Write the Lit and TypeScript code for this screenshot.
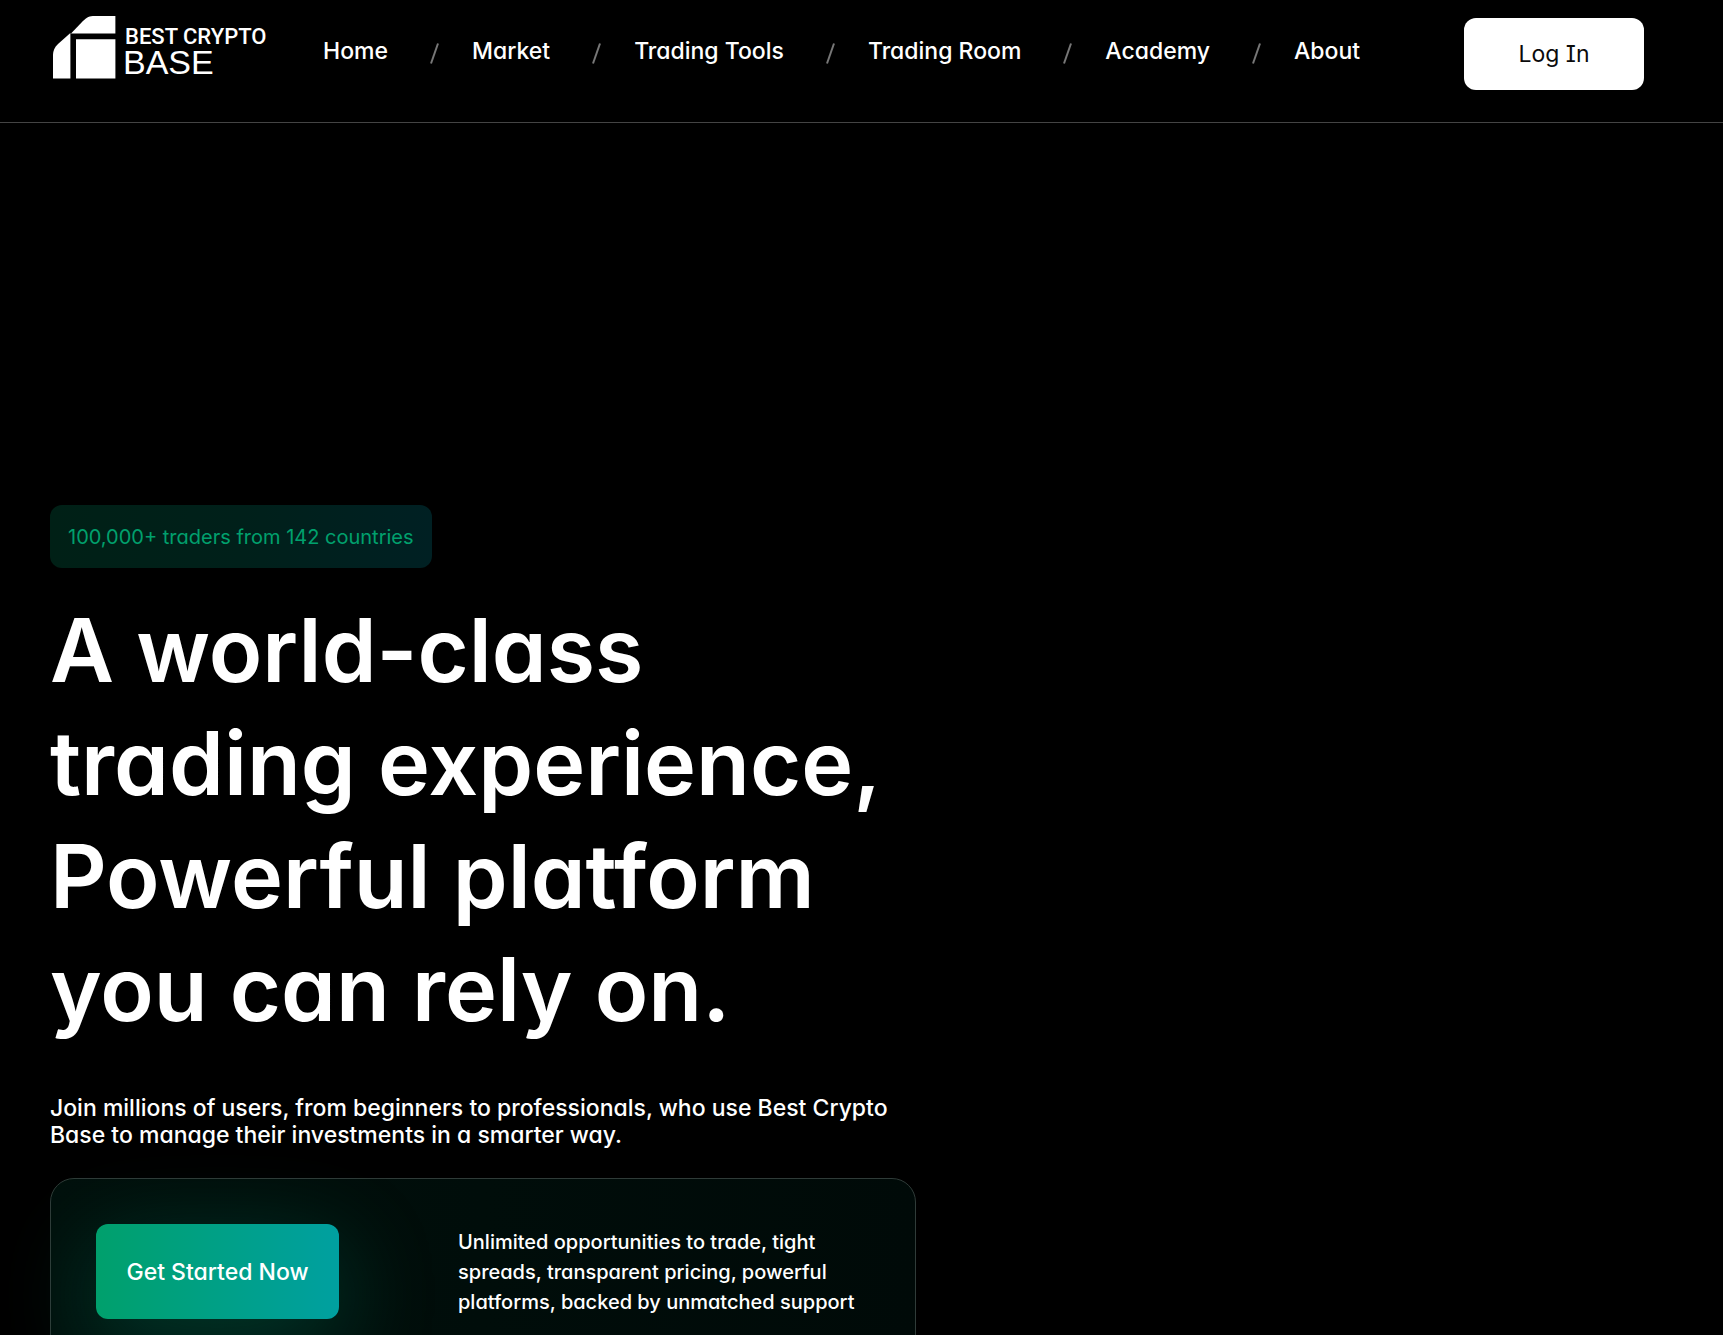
import { LitElement, css, html, svg } from "lit";
import { customElement } from "lit/decorators.js";

const NAV_ITEMS = ["Home", "Market", "Trading Tools", "Trading Room", "Academy", "About"];

const logo = svg`
  <svg class="logo" viewBox="0 0 216 66" role="img" aria-label="Best Crypto Base">
    <g fill="#fff">
      <path d="M0 62.4V39C0 34.500 1.500 31.500 5 28L17.400 17V62.400Z" />
      <path d="M18 17.400L29.500 5.500C34 1 36.500 0 41.500 0H62.400V17.400Z" />
      <path d="M23 23.200H62.400V62.400H23Z" />
      <text class="logo-top" x="72" y="28">BEST CRYPTO</text>
      <text class="logo-bottom" x="70" y="58">BASE</text>
    </g>
  </svg>
`;

@customElement("site-header")
export class SiteHeader extends LitElement {
  static styles = css`
    :host {
      display: block;
      border-bottom: 1px solid #444;
    }
    .bar {
      display: flex;
      align-items: flex-start;
      box-sizing: border-box;
      height: 122px;
      padding: 16px 79px 0 53px;
    }
    .home-link {
      display: block;
      flex: none;
      width: 216px;
      height: 66px;
      margin-right: 54px;
    }
    .logo {
      display: block;
      width: 216px;
      height: 66px;
    }
    .logo-top {
      font: 500 22px "Roboto", sans-serif;
    }
    .logo-bottom {
      font: 400 34px "Liberation Sans", Arial, sans-serif;
    }
    .links {
      display: flex;
      margin: 20px 0 0;
      padding: 0;
      list-style: none;
    }
    .item {
      display: flex;
      align-items: flex-start;
    }
    .link {
      color: #fff;
      font-size: 23px;
      font-weight: 500;
      line-height: 30px;
      white-space: nowrap;
      text-decoration: none;
    }
    .slash {
      width: 9px;
      height: 21px;
      margin: 7px 33px 0 42px;
      stroke: #777;
      stroke-width: 2;
    }
    .login {
      width: 180px;
      height: 72px;
      margin: 2px 0 0 auto;
      border: 0;
      border-radius: 12px;
      background: #fff;
      color: #0b0b0b;
      font: 400 23px "Inter", sans-serif;
      font-feature-settings: "cv11", "cv08";
      cursor: pointer;
    }
  `;

  render() {
    return html`
      <header class="bar">
        <a class="home-link" href="#">${logo}</a>
        <nav aria-label="Main">
          <ul class="links">
            ${NAV_ITEMS.map(
              (label, i) => html`
                <li class="item">
                  <a class="link" href="#">${label}</a>
                  ${i < NAV_ITEMS.length - 1
                    ? html`<svg class="slash" viewBox="0 0 9 21" aria-hidden="true">
                        <line x1="1" y1="20.500" x2="8" y2="0.500" />
                      </svg>`
                    : null}
                </li>
              `
            )}
          </ul>
        </nav>
        <button class="login" type="button">Log In</button>
      </header>
    `;
  }
}

@customElement("hero-section")
export class HeroSection extends LitElement {
  static styles = css`
    :host {
      display: block;
      padding: 382px 50px 0;
    }
    .column {
      width: 54%;
      max-width: 866px;
      min-width: 320px;
    }
    .badge {
      display: inline-flex;
      align-items: center;
      justify-content: center;
      box-sizing: border-box;
      height: 63px;
      padding: 0 18px;
      border-radius: 12px;
      background: linear-gradient(90deg, #002016, #00201a 50%, #002023);
      color: #00a06d;
      font-size: 20px;
    }
    .title {
      margin: 26px 0 0;
      font-size: 88px;
      font-weight: 600;
      line-height: 113px;
    }
    .lead {
      margin: 49px 0 0;
      font-size: 23px;
      font-weight: 500;
      line-height: 27px;
    }
    .card {
      display: grid;
      grid-template-columns: 362px 1fr;
      align-items: start;
      box-sizing: border-box;
      margin-top: 29px;
      padding: 45px;
      padding-right: 40px;
      min-height: 190px;
      border: 1px solid #2f3b38;
      border-radius: 24px;
      background: linear-gradient(90deg, #00100c, #000a08);
    }
    .cta {
      width: 243px;
      height: 95px;
      border: 0;
      border-radius: 12px;
      background: linear-gradient(90deg, #00a06c, #00a0a0);
      box-shadow: 0 24px 96px rgba(0, 160, 120, 0.32);
      color: #fff;
      font: 500 23px "Inter", sans-serif;
      font-feature-settings: "cv11";
      cursor: pointer;
    }
    .note {
      margin: 3px 0 0;
      font-size: 20px;
      font-weight: 500;
      line-height: 30px;
    }
  `;

  render() {
    return html`
      <section class="column">
        <div class="badge">100,000+ traders from 142 countries</div>
        <h1 class="title">A world-class trading experience, Powerful platform you can rely on.</h1>
        <p class="lead">
          Join millions of users, from beginners to professionals, who use Best Crypto Base to
          manage their investments in a smarter way.
        </p>
        <div class="card">
          <button class="cta" type="button">Get Started Now</button>
          <p class="note">
            Unlimited opportunities to trade, tight spreads, transparent pricing, powerful
            platforms, backed by unmatched support
          </p>
        </div>
      </section>
    `;
  }
}

@customElement("app-root")
export class AppRoot extends LitElement {
  static styles = css`
    :host {
      display: block;
      height: 100vh;
      overflow: hidden;
      background: #000;
      color: #fff;
      font-family: "Inter", sans-serif;
      font-feature-settings: "cv11";
    }
  `;

  render() {
    return html`
      <site-header></site-header>
      <hero-section></hero-section>
    `;
  }
}
